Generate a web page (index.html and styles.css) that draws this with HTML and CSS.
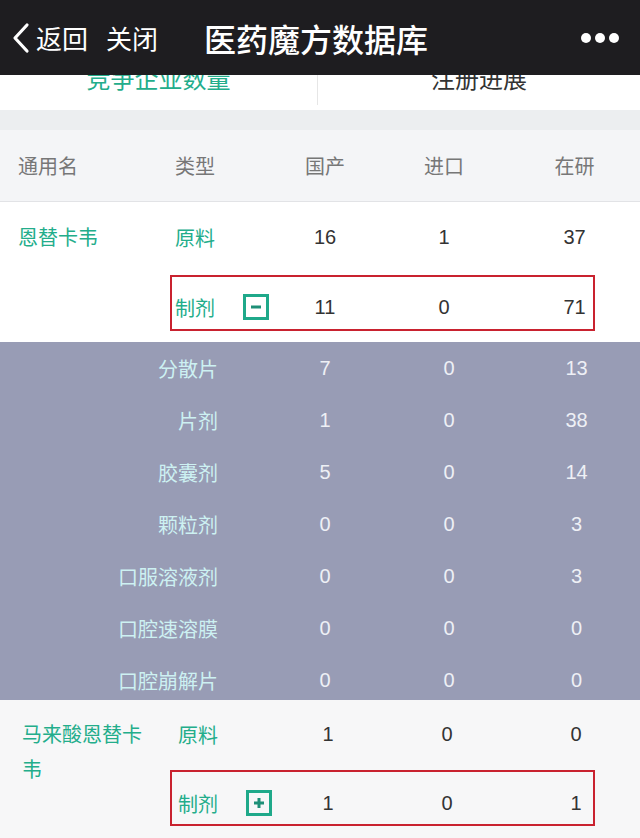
FILE: index.html
```html
<!DOCTYPE html>
<html lang="zh-CN">
<head>
    <meta charset="UTF-8">
    <meta name="viewport" content="width=device-width, initial-scale=1.0">
    <title>医药魔方数据库</title>
    <link rel="stylesheet" href="styles.css">
</head>
<body>
    <div class="topbar">
        <svg class="chevron" width="20" height="32" viewBox="0 0 20 32">
            <polyline points="16,3 4,16 16,29" fill="none" stroke="#fff" stroke-width="3.2" stroke-linecap="round" stroke-linejoin="round"/>
        </svg>
        <span class="nav-link back">返回</span>
        <span class="nav-link close">关闭</span>
        <span class="title">医药魔方数据库</span>
        <span class="dots"><i></i><i></i><i></i></span>
    </div>

    <div class="tabs">
        <div class="tab active"><span>竞争企业数量</span></div>
        <div class="tab"><span>注册进展</span></div>
    </div>

    <div class="spacer"></div>

    <div class="table">
        <div class="head-row">
            <div class="cell first">通用名</div>
            <div class="cell">类型</div>
            <div class="cell num">国产</div>
            <div class="cell num">进口</div>
            <div class="cell num last">在研</div>
        </div>

        <!-- 恩替卡韦 -->
        <div class="group">
            <div class="name">恩替卡韦</div>
            <div class="cell type">原料</div>
            <div class="cell num">16</div>
            <div class="cell num">1</div>
            <div class="cell num last">37</div>

            <div class="cell type marked"><span>制剂</span>
                <svg class="toggle" width="26" height="26" viewBox="0 0 26 26">
                    <rect x="1.5" y="1.5" width="23" height="23" fill="none" stroke="#1fa98a" stroke-width="3"/>
                    <rect x="8" y="11.5" width="10" height="3" fill="#1e8f77"/>
                </svg>
            </div>
            <div class="cell num">11</div>
            <div class="cell num">0</div>
            <div class="cell num last">71</div>
        </div>

        <div class="detail">
            <div class="detail-row"><div class="label">分散片</div><div class="cell num">7</div><div class="cell num">0</div><div class="cell num">13</div></div>
            <div class="detail-row"><div class="label">片剂</div><div class="cell num">1</div><div class="cell num">0</div><div class="cell num">38</div></div>
            <div class="detail-row"><div class="label">胶囊剂</div><div class="cell num">5</div><div class="cell num">0</div><div class="cell num">14</div></div>
            <div class="detail-row"><div class="label">颗粒剂</div><div class="cell num">0</div><div class="cell num">0</div><div class="cell num">3</div></div>
            <div class="detail-row"><div class="label">口服溶液剂</div><div class="cell num">0</div><div class="cell num">0</div><div class="cell num">3</div></div>
            <div class="detail-row"><div class="label">口腔速溶膜</div><div class="cell num">0</div><div class="cell num">0</div><div class="cell num">0</div></div>
            <div class="detail-row"><div class="label">口腔崩解片</div><div class="cell num">0</div><div class="cell num">0</div><div class="cell num">0</div></div>
        </div>

        <!-- 马来酸恩替卡韦 -->
        <div class="group grey">
            <div class="name">马来酸恩替卡韦</div>
            <div class="cell type">原料</div>
            <div class="cell num">1</div>
            <div class="cell num">0</div>
            <div class="cell num last">0</div>

            <div class="cell type marked"><span>制剂</span>
                <svg class="toggle" width="26" height="26" viewBox="0 0 26 26">
                    <rect x="1.5" y="1.5" width="23" height="23" fill="none" stroke="#1fa98a" stroke-width="3"/>
                    <rect x="8" y="11.5" width="10" height="3" fill="#1e8f77"/>
                    <rect x="11.5" y="8" width="3" height="10" fill="#1e8f77"/>
                </svg>
            </div>
            <div class="cell num">1</div>
            <div class="cell num">0</div>
            <div class="cell num last">1</div>
        </div>
    </div>
</body>
</html>
```

FILE: styles.css
```css
body {
    margin: 0;
    width: 640px;
    height: 838px;
    overflow: hidden;
    background-color: #f6f6f7;
    font-family: "Liberation Sans", "Noto Sans CJK SC", sans-serif;
    color: #333;
}

/* top navigation bar */
.topbar {
    height: 75px;
    background-color: #1e1d20;
    display: flex;
    align-items: center;
    color: #fff;
    font-family: "Noto Sans CJK SC", sans-serif;
}
.chevron {
    margin-left: 11px;
}
.nav-link {
    font-size: 26px;
}
.back {
    margin-left: 5px;
}
.close {
    margin-left: 18px;
}
.title {
    margin-left: 46px;
    font-size: 32px;
    font-weight: 500;
}
.dots {
    margin-left: auto;
    margin-right: 21px;
    display: flex;
    gap: 4px;
}
.dots i {
    width: 10px;
    height: 10px;
    border-radius: 50%;
    background-color: #fff;
}

/* tabs, scrolled half under the bar */
.tabs {
    height: 35px;
    background-color: #fff;
    display: flex;
    overflow: hidden;
    font-family: "Noto Sans CJK SC", sans-serif;
}
.tab {
    flex: 1;
    text-align: center;
    font-size: 24px;
    line-height: 30px;
    color: #333;
}
.tab span {
    display: block;
    margin-top: -12px;
}
.tab.active {
    flex: 0 0 317px;
    color: #23ad8b;
    border-right: 1px solid #e6e6e6;
    margin-bottom: 5px;
}

.spacer {
    height: 20px;
    background-color: #eceef0;
}

/* table */
.cell {
    font-size: 20px;
}
.num {
    text-align: center;
}
.last {
    padding-left: 6px;
}

.head-row {
    height: 71px;
    background-color: #f4f5f7;
    border-bottom: 1px solid #e2e3e6;
    display: grid;
    grid-template-columns: 175px 90px 120px 118px 1fr;
    align-items: center;
    color: #777;
    font-family: "Noto Sans CJK SC", sans-serif;
}
.head-row .first {
    padding-left: 18px;
}

.group {
    display: grid;
    grid-template-columns: 175px 90px 120px 118px 1fr;
    grid-template-rows: 70px 70px;
    align-items: center;
    background-color: #fff;
    position: relative;
}
.group .name {
    grid-row: 1 / span 2;
    align-self: start;
    padding: 17px 28px 0 18px;
    font-family: "Noto Sans CJK SC", sans-serif;
    font-size: 20px;
    line-height: 35px;
    color: #23ad8b;
}
.type {
    font-family: "Noto Sans CJK SC", sans-serif;
    color: #23ad8b;
    display: flex;
    align-items: center;
    white-space: nowrap;
}
.toggle {
    flex-shrink: 0;
    margin-left: 28px;
}

/* red annotation frame over the 制剂 row */
.group::after {
    content: "";
    position: absolute;
    left: 170px;
    top: 73px;
    width: 421px;
    height: 52px;
    border: 2px solid #c9222f;
}

.group.grey {
    background-color: #f7f7f8;
    grid-template-rows: 68px 70px;
    padding-left: 3px;
}
.group.grey .name {
    padding-top: 16px;
    padding-left: 19px;
}
.group.grey::after {
    top: 70px;
}

/* expanded dosage forms */
.detail {
    height: 358px;
    overflow: hidden;
    background-color: #989cb5;
}
.detail-row {
    height: 52px;
    display: grid;
    grid-template-columns: 265px 120px 128px 1fr;
    align-items: center;
    color: #eef0f5;
}
.detail-row .label {
    text-align: right;
    padding-right: 47px;
    font-family: "Noto Sans CJK SC", sans-serif;
    font-size: 20px;
    color: #cdf1f2;
}
```
